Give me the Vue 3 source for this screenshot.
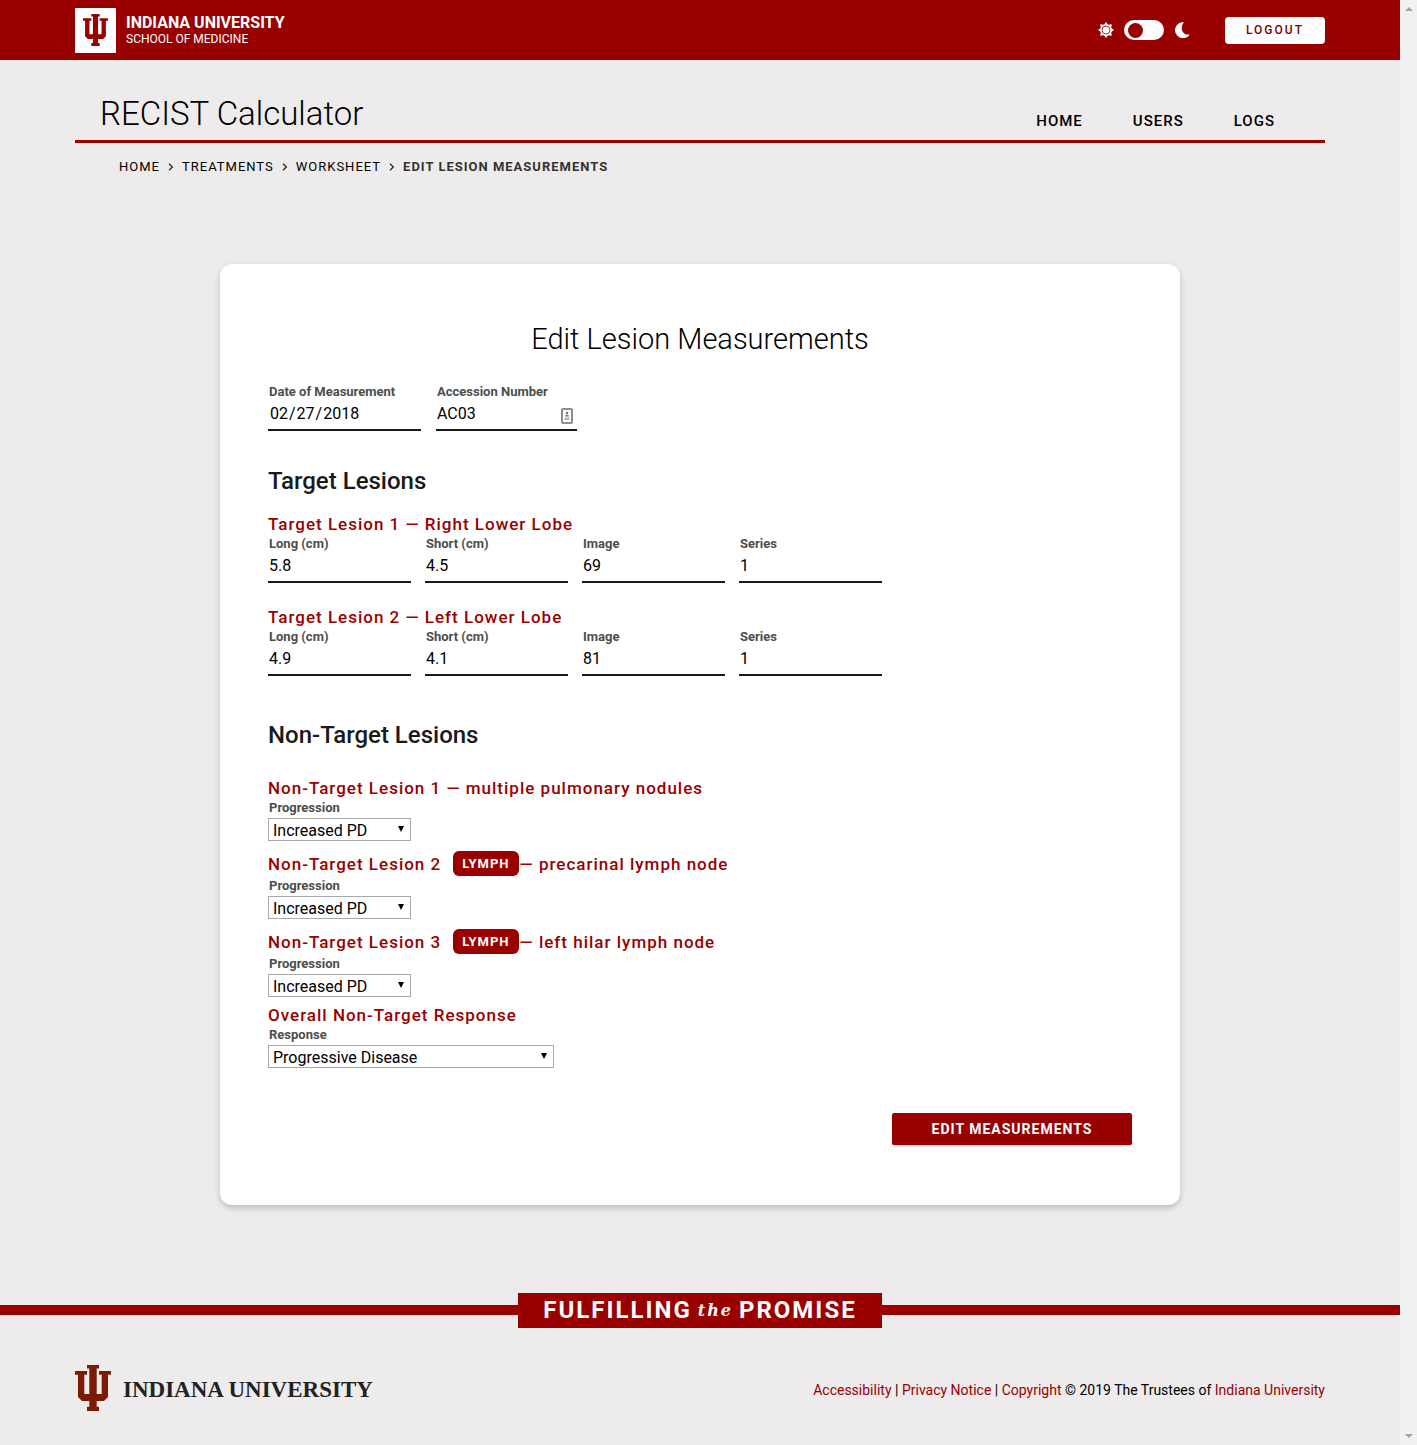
<script setup>
import { ref, reactive } from 'vue'

const dark = ref(false)
const date = ref('2018-02-27')
const accession = ref('AC03')
const overall = ref('Progressive Disease')

const navLinks = ['Home', 'Users', 'Logs']
const crumbs = ['Home', 'Treatments', 'Worksheet']

const columns = [
  { key: 'long', label: 'Long (cm)' },
  { key: 'short', label: 'Short (cm)' },
  { key: 'image', label: 'Image' },
  { key: 'series', label: 'Series' }
]

const targets = reactive([
  { site: 'Right Lower Lobe', long: '5.8', short: '4.5', image: '69', series: '1' },
  { site: 'Left Lower Lobe', long: '4.9', short: '4.1', image: '81', series: '1' }
])

const nonTargets = reactive([
  { site: 'multiple pulmonary nodules', lymph: false, progression: 'Increased PD' },
  { site: 'precarinal lymph node', lymph: true, progression: 'Increased PD' },
  { site: 'left hilar lymph node', lymph: true, progression: 'Increased PD' }
])

const trident =
  'M12 0H24V3.6H21.7V29H26.7V9.8H24V6H36V9.8H33V32L29 36H21.7V41.8H24V46H12V41.8H14.3V36H7L3 32V9.8H0V6H12V9.8H9.3V29H14.3V3.6H12Z'
</script>

<template>
  <div class="window">
    <div class="page">
      <header class="brand-bar">
        <div class="container brand-row">
          <a class="brand" href="#">
            <span class="brand-mark">
              <svg width="25" height="32" viewBox="0 0 36 46" aria-hidden="true"><path :d="trident" /></svg>
            </span>
            <span class="brand-text">
              <span class="brand-name">INDIANA UNIVERSITY</span>
              <span class="brand-school">SCHOOL OF MEDICINE</span>
            </span>
          </a>
          <div class="tools">
            <svg class="tool-icon" width="16" height="16" viewBox="0 0 16 16" aria-hidden="true">
              <path d="M8 0L10 2.8L13.8 2.2L13.2 6L16 8L13.2 10L13.8 13.8L10 13.2L8 16L6 13.2L2.2 13.8L2.8 10L0 8L2.8 6L2.2 2.2L6 2.8Z" />
              <circle cx="8" cy="8" r="4" fill="none" stroke="#990000" stroke-width="0.8" />
            </svg>
            <input v-model="dark" class="toggle" type="checkbox" aria-label="Dark mode" />
            <svg class="tool-icon" width="16" height="16" viewBox="0 0 16 16" aria-hidden="true">
              <path d="M10 0.2A8 8 0 1 0 15.8 12.4C9 14 5 6 10 0.2Z" />
            </svg>
            <button class="logout" type="button">LOGOUT</button>
          </div>
        </div>
      </header>

      <div class="container">
        <div class="title-row">
          <div class="app-title">RECIST Calculator</div>
          <nav class="nav">
            <a v-for="link in navLinks" :key="link" href="#">{{ link }}</a>
          </nav>
        </div>
        <nav class="crumbs" aria-label="Breadcrumb">
          <template v-for="crumb in crumbs" :key="crumb">
            <a href="#">{{ crumb }}</a>
            <svg width="6" height="8" viewBox="0 0 6 8" aria-hidden="true"><path d="M1 0.8L4.4 4L1 7.2" /></svg>
          </template>
          <span class="crumb-current">Edit Lesion Measurements</span>
        </nav>
      </div>

      <main class="card">
        <h1>Edit Lesion Measurements</h1>
        <form @submit.prevent>
          <div class="fields meta">
            <div class="field field-date">
              <label for="date">Date of Measurement</label>
              <input id="date" v-model="date" type="date" />
            </div>
            <div class="field field-accession">
              <label for="accession">Accession Number</label>
              <input id="accession" v-model="accession" type="text" />
              <svg class="autofill" width="12" height="16" viewBox="0 0 12 16" aria-hidden="true">
                <rect x="1" y="1" width="10" height="14" rx="1" fill="#fff" stroke="#8e8e8e" stroke-width="2" />
                <circle cx="6" cy="5" r="1.3" fill="#777" />
                <path d="M4 8.6C4 6 8 6 8 8.6Z" fill="#777" />
                <path d="M3.5 9.6H8.5V12H3.5Z" fill="#b4b4b4" />
              </svg>
            </div>
          </div>

          <h2>Target Lesions</h2>
          <section v-for="(lesion, i) in targets" :key="lesion.site" class="target">
            <h3>Target Lesion {{ i + 1 }} — {{ lesion.site }}</h3>
            <div class="fields">
              <div v-for="col in columns" :key="col.key" class="field">
                <label :for="`t${i}-${col.key}`">{{ col.label }}</label>
                <input :id="`t${i}-${col.key}`" v-model="lesion[col.key]" type="text" />
              </div>
            </div>
          </section>

          <h2 class="non-target-title">Non-Target Lesions</h2>
          <section v-for="(lesion, i) in nonTargets" :key="lesion.site" class="non-target">
            <h3>
              <span>Non-Target Lesion {{ i + 1 }}</span>
              <span v-if="lesion.lymph" class="badge">LYMPH</span>
              <span v-else>&nbsp;</span>
              <span>— {{ lesion.site }}</span>
            </h3>
            <label :for="`n${i}`">Progression</label>
            <div class="select">
              <select :id="`n${i}`" v-model="lesion.progression">
                <option>Increased PD</option>
                <option>Stable</option>
                <option>Resolved</option>
              </select>
            </div>
          </section>

          <section class="overall">
            <h3>Overall Non-Target Response</h3>
            <label for="overall">Response</label>
            <div class="select select-wide">
              <select id="overall" v-model="overall">
                <option>Progressive Disease</option>
                <option>Stable Disease</option>
                <option>Complete Response</option>
              </select>
            </div>
          </section>

          <div class="actions">
            <button class="submit" type="submit">EDIT MEASUREMENTS</button>
          </div>
        </form>
      </main>

      <div class="promise">
        <div class="promise-box">
          <span>FULFILLING</span>
          <em>the</em>
          <span>PROMISE</span>
        </div>
      </div>

      <footer class="container footer">
        <a class="footer-logo" href="#">
          <svg width="36" height="46" viewBox="0 0 36 46" aria-hidden="true"><path :d="trident" /></svg>
          <span>INDIANA UNIVERSITY</span>
        </a>
        <p class="legal">
          <a href="#">Accessibility</a> | <a href="#">Privacy Notice</a> | <a href="#">Copyright</a>
          © 2019 The Trustees of <a href="#">Indiana University</a>
        </p>
      </footer>
    </div>

    <div class="scrollbar" aria-hidden="true">
      <span class="arrow arrow-up"></span>
      <span class="arrow arrow-down"></span>
    </div>
  </div>
</template>

<style>
body {
  background: #edebeb;
}
</style>

<style scoped>
* {
  box-sizing: border-box;
}

.window {
  display: flex;
  min-height: 100vh;
  font-family: Roboto, 'Liberation Sans', sans-serif;
  color: #000;
}

.page {
  flex: 1;
  min-width: 0;
}

.container {
  max-width: 1250px;
  margin: 0 auto;
}

a {
  color: inherit;
  text-decoration: none;
}

.brand-bar {
  background: #990000;
  color: #fff;
}

.brand-row {
  display: flex;
  align-items: center;
  justify-content: space-between;
  height: 60px;
}

.brand {
  display: flex;
  align-items: center;
  gap: 10px;
}

.brand-mark {
  display: flex;
  align-items: center;
  justify-content: center;
  width: 41px;
  height: 45px;
  background: #fff;
  fill: #990000;
}

.brand-text {
  display: flex;
  flex-direction: column;
  padding-top: 2px;
  line-height: 16px;
}

.brand-name {
  font-size: 16px;
  font-weight: 700;
}

.brand-school {
  font-size: 12px;
}

.tools {
  display: flex;
  align-items: center;
  gap: 10px;
}

.tool-icon {
  fill: #fff;
}

.toggle {
  appearance: none;
  display: flex;
  align-items: center;
  width: 40px;
  height: 20px;
  margin: 0;
  padding: 0 4px;
  border-radius: 10px;
  background: #fff;
}

.toggle::before {
  content: '';
  width: 15px;
  height: 15px;
  border-radius: 50%;
  background: #990000;
}

.toggle:checked::before {
  margin-left: auto;
}

.logout {
  width: 100px;
  height: 27px;
  margin-left: 25px;
  padding: 0;
  border: 0;
  border-radius: 4px;
  background: #fff;
  color: #7a0000;
  font: 500 12px/26px Roboto, sans-serif;
  letter-spacing: 2px;
}

.title-row {
  display: flex;
  align-items: flex-end;
  justify-content: space-between;
  height: 83px;
  padding: 0 50px 6px 25px;
  border-bottom: 3px solid #990000;
}

.app-title {
  font-size: 33px;
  font-weight: 300;
  line-height: 40px;
}

.nav {
  display: flex;
  gap: 50px;
  font-size: 15px;
  font-weight: 500;
  line-height: 26px;
  letter-spacing: 1px;
  text-transform: uppercase;
}

.crumbs {
  display: flex;
  align-items: center;
  gap: 8px;
  padding: 14px 44px 0;
  font-size: 13px;
  line-height: 20px;
  letter-spacing: 1px;
  text-transform: uppercase;
}

.crumbs svg {
  fill: none;
  stroke: #222;
  stroke-width: 1.2;
}

.crumb-current {
  color: #333;
  font-weight: 700;
}

.card {
  max-width: 960px;
  margin: 87px auto 0;
  padding: 57px 48px 60px;
  border-radius: 12px;
  background: #fff;
  box-shadow: 0 3px 6px rgba(0, 0, 0, 0.2);
}

h1,
h2,
h3 {
  margin: 0;
}

h1 {
  margin-bottom: 25px;
  font-size: 29px;
  font-weight: 300;
  line-height: 36px;
  text-align: center;
}

h2 {
  margin: 35px 0 18px;
  color: #1a1a1a;
  font-size: 24px;
  font-weight: 500;
  line-height: 30px;
}

.non-target-title {
  margin: 44px 0 28px;
}

h3 {
  color: #990000;
  font-size: 17px;
  font-weight: 500;
  line-height: 20px;
  letter-spacing: 1px;
}

label {
  display: block;
  padding-left: 1px;
  color: #4d4d4d;
  font-size: 13px;
  font-weight: 700;
  line-height: 20px;
}

.fields {
  display: flex;
  gap: 14px;
}

.meta {
  gap: 15px;
}

.field {
  position: relative;
  width: 143px;
}

.field-date {
  width: 153px;
}

.field-accession {
  width: 141px;
}

.field input {
  display: block;
  width: 100%;
  height: 29px;
  padding: 0 1px 5px;
  border: 0;
  border-bottom: 2px solid #1a1a1a;
  border-radius: 0;
  background: transparent;
  color: #000;
  font: 400 16px Roboto, sans-serif;
}

.field input::-webkit-calendar-picker-indicator {
  display: none;
}

.autofill {
  position: absolute;
  right: 4px;
  bottom: 7px;
}

.target + .target {
  margin-top: 24px;
}

.non-target + .non-target {
  margin-top: 10px;
}

.non-target h3 {
  display: flex;
  align-items: center;
}

.badge {
  margin-left: 12px;
  margin-right: 1px;
  padding: 0 9px;
  border-radius: 6px;
  background: #990000;
  color: #fff;
  font-size: 13px;
  font-weight: 700;
  line-height: 25px;
}

.select {
  position: relative;
  width: 143px;
}

.select-wide {
  width: 286px;
}

.select::after {
  content: '';
  position: absolute;
  top: 8px;
  right: 7px;
  border: 3px solid transparent;
  border-top: 6px solid #000;
  border-bottom: 0;
  pointer-events: none;
}

.select select {
  appearance: none;
  display: block;
  width: 100%;
  height: 23px;
  padding: 2px 4px 0;
  border: 1px solid #a9a9a9;
  border-radius: 0;
  background: #fff;
  color: #000;
  font: 400 16px/20px Roboto, sans-serif;
}

.overall {
  margin-top: 8px;
}

.actions {
  display: flex;
  justify-content: flex-end;
  margin-top: 45px;
}

.submit {
  width: 240px;
  height: 32px;
  padding: 0;
  border: 0;
  border-radius: 2px;
  background: #990000;
  box-shadow: 0 1px 2px rgba(0, 0, 0, 0.2);
  color: #fff;
  font: 700 14px/32px Roboto, sans-serif;
  letter-spacing: 1px;
}

.promise {
  display: flex;
  justify-content: center;
  margin-top: 88px;
  background: linear-gradient(#990000, #990000) center 12px / 100% 10px no-repeat;
}

.promise-box {
  display: flex;
  align-items: center;
  justify-content: center;
  gap: 6px;
  width: 364px;
  height: 35px;
  background: #990000;
  color: #fff;
  font-size: 24px;
  font-weight: 700;
  line-height: 35px;
  letter-spacing: 2px;
}

.promise-box em {
  font-family: 'DejaVu Serif', serif;
  font-size: 16px;
}

.footer {
  display: flex;
  align-items: center;
  justify-content: space-between;
  padding: 37px 0 34px;
}

.footer-logo {
  display: flex;
  align-items: center;
  gap: 12px;
  color: #222;
  font-family: 'Liberation Serif', serif;
  font-size: 23px;
  font-weight: 700;
}

.footer-logo span {
  padding-top: 4px;
  line-height: 42px;
}

.footer-logo svg {
  fill: #7d1a06;
}

.legal {
  margin: 0;
  padding-top: 3px;
  font-size: 14px;
  line-height: 20px;
}

.legal a {
  color: #990000;
}

.scrollbar {
  display: flex;
  flex-direction: column;
  align-items: center;
  justify-content: space-between;
  width: 17px;
  padding: 7px 0;
  background: #f1f1f1;
}

.arrow {
  border: 4px solid transparent;
}

.arrow-up {
  border-top: 0;
  border-bottom-color: #a3a3a3;
}

.arrow-down {
  border-bottom: 0;
  border-top-color: #a3a3a3;
}
</style>
